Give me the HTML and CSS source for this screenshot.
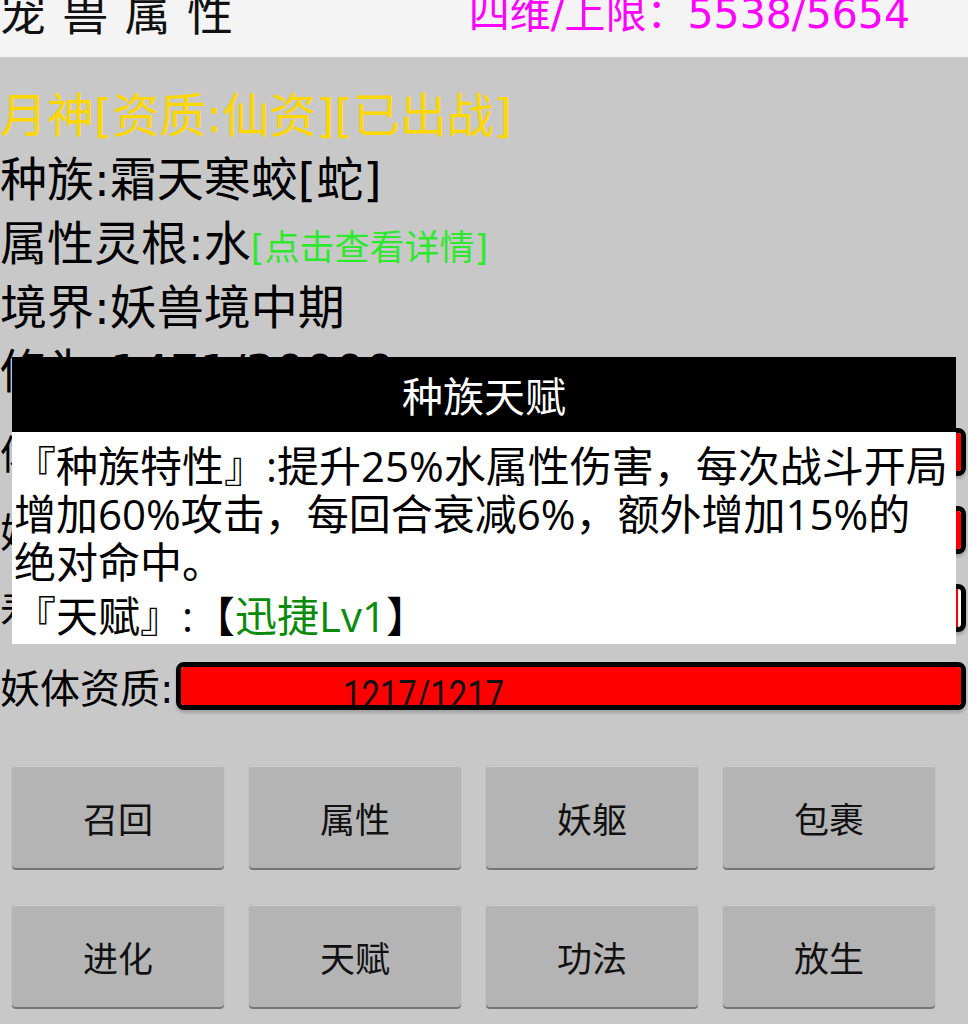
FILE: index.html
```html
<!DOCTYPE html>
<html lang="zh-CN">
<head>
<meta charset="utf-8">
<title>宠兽属性</title>
<link rel="stylesheet" href="styles.css">
</head>
<body>
<div class="app">
  <header class="topbar">
    <span class="title">宠 兽 属 性</span>
    <span class="stats">四维/上限：5538/5654</span>
  </header>
  <main class="info">
    <p class="line name">月神[资质:仙资][已出战]</p>
    <p class="line">种族:霜天寒蛟[蛇]</p>
    <p class="line">属性灵根:水<span class="link">[点击查看详情]</span></p>
    <p class="line">境界:妖兽境中期</p>
    <p class="line">修为:1471/30000</p>
    <div class="bars">
      <div class="bar-row"><span class="bar-label">体力:</span><div class="bar"><div class="fill" style="width:100%"></div></div></div>
      <div class="bar-row"><span class="bar-label">妖力:</span><div class="bar"><div class="fill" style="width:100%"></div></div></div>
      <div class="bar-row"><span class="bar-label">寿命:</span><div class="bar"><div class="fill" style="width:99.6%"></div></div></div>
      <div class="bar-row"><span class="bar-label">妖体资质:</span><div class="bar"><div class="fill" style="width:100%"><span class="bar-text">1217/1217</span></div></div></div>
    </div>
  </main>
  <nav class="buttons">
    <button class="btn">召回</button>
    <button class="btn">属性</button>
    <button class="btn">妖躯</button>
    <button class="btn">包裹</button>
    <button class="btn">进化</button>
    <button class="btn">天赋</button>
    <button class="btn">功法</button>
    <button class="btn">放生</button>
  </nav>
  <div class="dialog">
    <div class="dialog-head">种族天赋</div>
    <div class="dialog-body">
      <p class="para">『种族特性』:提升25%水属性伤害，每次战斗开局<br>增加60%攻击，每回合衰减6%，额外增加15%的<br>绝对命中。</p>
      <p class="para talent">『天赋』:【<span class="green">迅捷Lv1</span>】</p>
    </div>
  </div>
</div>
</body>
</html>
```
FILE: styles.css
```css
html, body {
  margin: 0;
  padding: 0;
}
body {
  width: 968px;
  height: 1024px;
  overflow: hidden;
  background: #c8c8c8;
  font-family: "DejaVu Sans", "Noto Sans CJK SC", sans-serif;
  color: #000;
}
.app {
  position: relative;
  width: 968px;
  height: 1024px;
  display: flex;
  flex-direction: column;
}
.topbar {
  height: 57px;
  background: #f4f4f4;
  display: flex;
  justify-content: space-between;
  align-items: flex-start;
  overflow: hidden;
}
.title {
  font-family: "Noto Sans CJK SC", sans-serif;
  font-size: 46px;
  line-height: 46px;
  letter-spacing: 3px;
  margin-top: -13px;
  color: #111;
}
.stats {
  font-size: 41px;
  line-height: 41px;
  margin-top: -6px;
  margin-right: 58px;
  color: #ff00ff;
}
.info {
  padding-top: 27px;
}
.line {
  margin: 0;
  font-size: 47px;
  line-height: 64px;
  height: 64px;
  white-space: nowrap;
  color: #000;
}
.name {
  color: #ffd700;
}
.link {
  font-size: 35px;
  color: #2ee82e;
}
.bars {
  margin-top: 9px;
}
.bar-row {
  height: 78px;
  display: flex;
  align-items: center;
  padding-right: 2px;
}
.bar-label {
  font-size: 40px;
  white-space: nowrap;
  margin-right: 3px;
}
.bar {
  flex: 1;
  height: 38px;
  border: 5px solid #000;
  border-radius: 8px;
  background: #fff;
  overflow: hidden;
  box-shadow: 0 3px 3px rgba(0, 0, 0, 0.18);
}
.fill {
  height: 100%;
  background: #ff0000;
  overflow: hidden;
}
.bar-text {
  display: inline-block;
  font-family: "Roboto", "DejaVu Sans", sans-serif;
  font-size: 41px;
  line-height: 40px;
  margin-top: 8px;
  margin-left: 162px;
  transform: scaleX(0.8);
  transform-origin: left center;
  color: #111;
}
.buttons {
  margin-top: 41px;
  padding-left: 12px;
  display: grid;
  grid-template-columns: repeat(4, 212px);
  grid-auto-rows: 102px;
  column-gap: 25px;
  row-gap: 37px;
}
.btn {
  margin: 0;
  padding: 0;
  border: none;
  border-top: 1px solid #cfcfcf;
  border-radius: 4px;
  background: #b4b4b4;
  box-shadow: 0 2px 0 #767676, 0 0 1px #8a8a8a;
  font-family: "Noto Sans CJK SC", sans-serif;
  font-size: 35px;
  color: #111;
}
.dialog {
  position: absolute;
  left: 12px;
  top: 357px;
  width: 944px;
}
.dialog-head {
  height: 75px;
  background: #000;
  color: #fff;
  font-family: "Noto Sans CJK SC", sans-serif;
  font-size: 41px;
  line-height: 75px;
  text-align: center;
}
.dialog-body {
  background: #fff;
  padding: 10px 0 4px 2px;
}
.para {
  margin: 0;
  font-family: "Open Sans", "Noto Sans CJK SC", sans-serif;
  font-size: 42px;
  line-height: 48px;
  white-space: nowrap;
}
.talent {
  margin-top: 6px;
}
.green {
  color: #0b8a0b;
}
```
